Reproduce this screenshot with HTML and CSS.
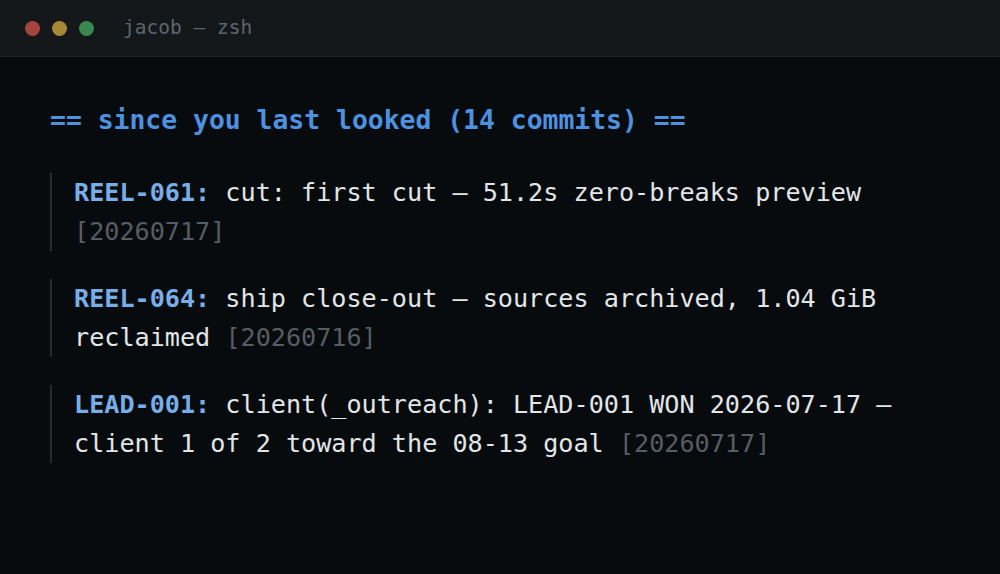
FILE: index.html
```html
<!DOCTYPE html>
<html lang="en">
<head>
<meta charset="utf-8">
<title>jacob — zsh</title>
<link rel="stylesheet" href="styles.css">
</head>
<body>
<div class="window">
  <header class="titlebar">
    <div class="lights">
      <span class="dot red"></span>
      <span class="dot yellow"></span>
      <span class="dot green"></span>
    </div>
    <div class="title">jacob — zsh</div>
  </header>
  <main class="term">
    <h1 class="heading">== since you last looked (14 commits) ==</h1>
    <div class="entries">
      <div class="entry"><span class="key">REEL-061:</span> cut: first cut — 51.2s zero-breaks preview <span class="date">[20260717]</span></div>
      <div class="entry"><span class="key">REEL-064:</span> ship close-out — sources archived, 1.04 GiB reclaimed <span class="date">[20260716]</span></div>
      <div class="entry"><span class="key">LEAD-001:</span> client(_outreach): LEAD-001 WON 2026-07-17 — client 1 of 2 toward the 08-13 goal <span class="date">[20260717]</span></div>
    </div>
  </main>
</div>
</body>
</html>
```

FILE: styles.css
```css
html, body {
  margin: 0;
  padding: 0;
  background: #070b0e;
  font-family: "DejaVu Sans Mono", "Liberation Mono", monospace;
}
.window {
  width: 1000px;
  height: 574px;
  display: flex;
  flex-direction: column;
  background: #070b0e;
}
.titlebar {
  height: 56px;
  border-bottom: 1px solid #1d2225;
  background: #14181b;
  display: flex;
  align-items: center;
  padding-left: 25px;
  gap: 29px;
}
.lights {
  display: flex;
  gap: 12px;
}
.dot {
  width: 15px;
  height: 15px;
  border-radius: 50%;
  display: block;
}
.red { background: #a6453f; }
.yellow { background: #a78935; }
.green { background: #3c8950; }
.title {
  color: #5f666b;
  font-size: 19.5px;
  margin-top: -1px;
}
.term {
  padding: 43px 50px 0 50px;
}
.heading {
  margin: 0;
  font-size: 26.4px;
  line-height: 40px;
  font-weight: bold;
  color: #4d92e0;
}
.entries {
  margin-top: 33px;
  display: flex;
  flex-direction: column;
  gap: 28px;
}
.entry {
  border-left: 2px solid #272b2e;
  padding-left: 22px;
  font-size: 25.15px;
  line-height: 39px;
  color: #e2e6e8;
}
.key {
  color: #78aee8;
  font-weight: bold;
}
.date {
  color: #575d62;
}
```
